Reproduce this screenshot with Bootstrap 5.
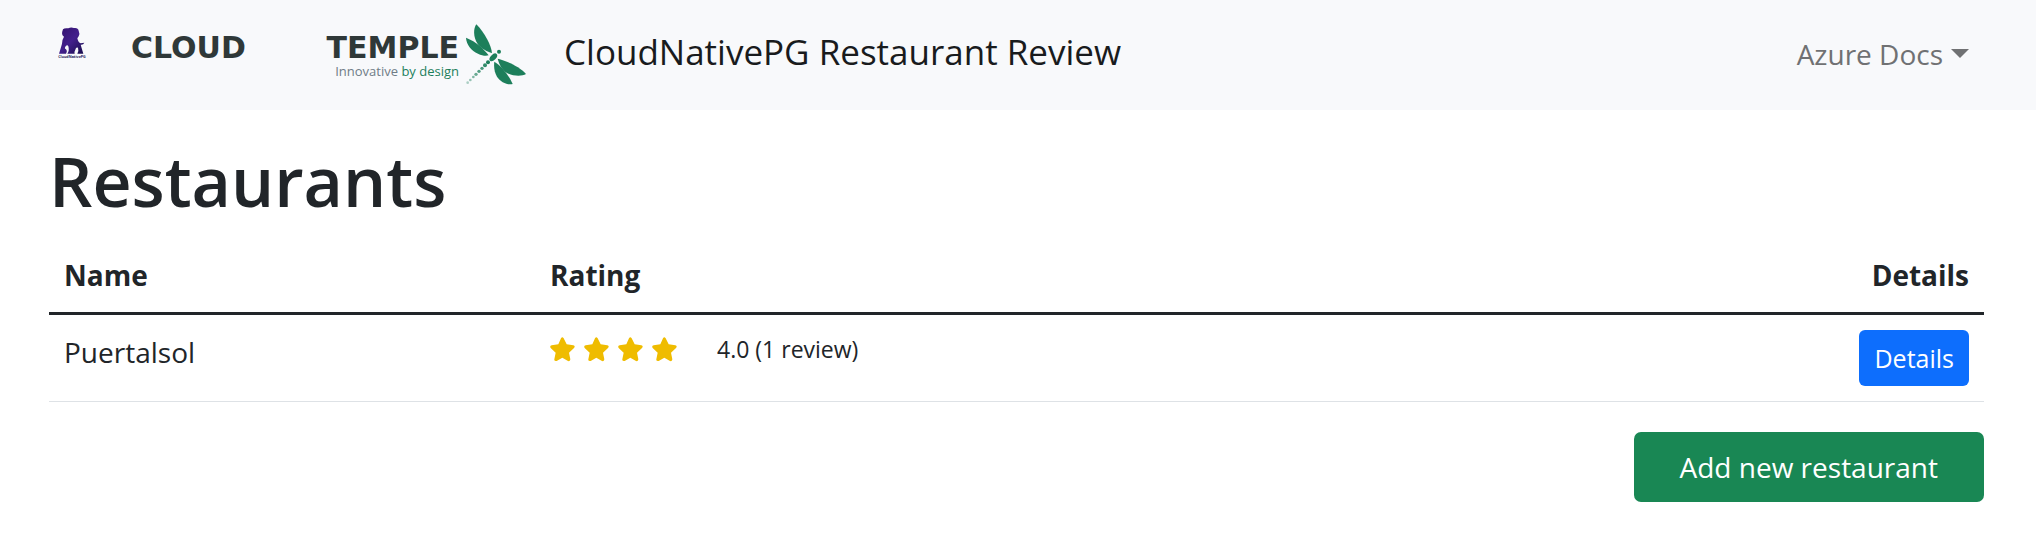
<!DOCTYPE html>
<html lang="en">
<head>
<meta charset="utf-8">
<meta name="viewport" content="width=device-width, initial-scale=1">
<title>CloudNativePG Restaurant Review</title>
<link href="https://cdn.jsdelivr.net/npm/bootstrap@5.3.0/dist/css/bootstrap.min.css" rel="stylesheet">
<style>
  body { font-family: "Open Sans", "Noto Sans", sans-serif; font-size: 28px; line-height: 45px; }
  .site-bar { background: #f8f9fb; min-height: 110px; padding: 0 67px 0 54px; }
  .pg-logo { width: 36px; height: 42px; margin: 0 41px 24px 0; }
  .temple-words { width: 328px; padding-top: 4px; color: #2f3838; font: 700 30px/28px "DejaVu Sans", sans-serif; }
  .temple-tag { font: 13px/18px "Open Sans", sans-serif; color: #6f7c86; }
  .temple-tag span { color: #1d7f5b; }
  .dragonfly { width: 62px; height: 62px; margin-left: 6px; }
  .site-title { margin-left: 37px; font-size: 35px; line-height: 54px; color: #191b1d; padding-bottom: 6px; }
  .docs-link { color: #707173; padding-bottom: 2px; }
  .docs-link:hover { color: #444; }
  .docs-link::after { margin-left: 8px; border-width: 9px 9px 0; vertical-align: 7px; }
  .page-main { padding: 26px 52px 36px 49px; }
  .page-main h1 { font-size: 68px; line-height: 90px; font-weight: 600; margin: 0 0 12px; }
  .rest-table { margin-bottom: 30px; border-color: #dee2e6; --bs-table-color: #212529; }
  .rest-table > :not(caption) > * > * { padding: 15px; }
  .rest-table thead th { border-bottom: 3px solid #212529; padding-bottom: 14px; }
  .rest-table th:first-child { width: 486px; }
  .rating { font-size: 23px; line-height: 38px; }
  .rating svg { width: 25px; height: 25px; fill: #efbc00; }
  .stars { gap: 9px; margin-right: 40px; }
  .btn-row { font-size: 25px; line-height: 36px; padding: 10px 15px; border-radius: 6px; border: 0; }
  .btn-add { font-size: 28px; line-height: 40px; padding: 15px 46px; border-radius: 7px; border: 0; }
</style>
</head>
<body>
<nav class="site-bar d-flex align-items-center">
  <a href="#" class="pg-logo flex-shrink-0 d-flex" aria-label="CloudNativePG">
    <svg viewBox="0 0 108 126" width="36" height="42">
      <defs><linearGradient id="eleph" x1="0" y1="0" x2="1" y2="1"><stop offset="0" stop-color="#32106c"/><stop offset=".5" stop-color="#43208c"/><stop offset="1" stop-color="#160c4a"/></linearGradient></defs>
      <path fill="url(#eleph)" d="M27 22Q32 17 43 19Q50 15 60 18Q72 16 74 26Q78 34 74 43L70 49Q73 63 80 64L91 62Q88 69 80 68L88 95H70Q75 86 72 77Q66 74 64 83Q60 90 62 95H40Q47 86 43 73Q40 66 35 73Q30 80 36 82Q41 87 36 95H15Q21 76 24 65Q24 53 30 44Q20 40 27 22z"/>
      <text x="54" y="109" text-anchor="middle" font-family="Open Sans, sans-serif" font-weight="700" font-size="11" fill="#241858">CloudNativePG</text>
    </svg>
  </a>
  <a href="#" class="d-flex align-items-center text-decoration-none flex-shrink-0">
    <span class="temple-words">
      <span class="d-flex justify-content-between"><span>CLOUD</span><span>TEMPLE</span></span>
      <span class="temple-tag d-block text-end">Innovative <span>by design</span></span>
    </span>
    <svg class="dragonfly" viewBox="45 43 186 186" fill="#1d7f5b">
      <path d="M79 44C70 56 69 82 83 103C94 118 112 126 126 130C124 108 104 69 79 44z"/>
      <path d="M48 84C49 105 64 123 84 132C96 138 108 140 116 137C103 119 79 96 48 84z"/>
      <path d="M143 147C158 150 208 168 228 193C216 200 191 200 171 190C157 182 148 165 143 147z"/>
      <path d="M133 156C151 166 174 192 188 223C172 227 151 217 141 201C133 188 131 171 133 156z"/>
      <ellipse cx="130" cy="143" rx="14" ry="8" transform="rotate(-45 130 143)"/>
      <circle cx="147" cy="126" r="6"/>
      <circle cx="114" cy="158" r="6"/><circle cx="105" cy="167" r="6" opacity=".9"/>
      <circle cx="96" cy="176" r="5" opacity=".8"/><circle cx="87" cy="185" r="5" opacity=".75"/>
      <circle cx="78" cy="194" r="5" opacity=".65"/><circle cx="70" cy="202" r="4" opacity=".55"/>
      <circle cx="61" cy="211" r="4" opacity=".45"/><circle cx="53" cy="219" r="4" opacity=".35"/>
    </svg>
  </a>
  <span class="site-title text-nowrap">CloudNativePG Restaurant Review</span>
  <a href="#" class="docs-link dropdown-toggle text-decoration-none text-nowrap ms-auto" role="button" data-bs-toggle="dropdown">Azure Docs</a>
</nav>

<main class="page-main">
  <h1>Restaurants</h1>
  <table class="table rest-table">
    <thead>
      <tr><th>Name</th><th>Rating</th><th class="text-end">Details</th></tr>
    </thead>
    <tbody>
      <tr>
        <td>Puertalsol</td>
        <td>
          <div class="rating d-flex align-items-center">
            <span class="stars d-flex" role="img" aria-label="4 stars">
              <svg viewBox="0 0 75 75"><path id="star" d="M33 4q4-6 8 0l9 18 20 3q7 2 2 8L57 47l4 20q0 7-7 5L37 62 20 72q-8 1-7-5l4-20L2 33q-4-6 3-8l20-3z"/></svg>
              <svg viewBox="0 0 75 75"><use href="#star"/></svg>
              <svg viewBox="0 0 75 75"><use href="#star"/></svg>
              <svg viewBox="0 0 75 75"><use href="#star"/></svg>
            </span>
            <span>4.0 (1 review)</span>
          </div>
        </td>
        <td class="text-end"><button type="button" class="btn btn-primary btn-row d-block ms-auto">Details</button></td>
      </tr>
    </tbody>
  </table>
  <button type="button" class="btn btn-success btn-add d-block ms-auto">Add new restaurant</button>
</main>
<script src="https://cdn.jsdelivr.net/npm/bootstrap@5.3.0/dist/js/bootstrap.bundle.min.js"></script>
</body>
</html>
